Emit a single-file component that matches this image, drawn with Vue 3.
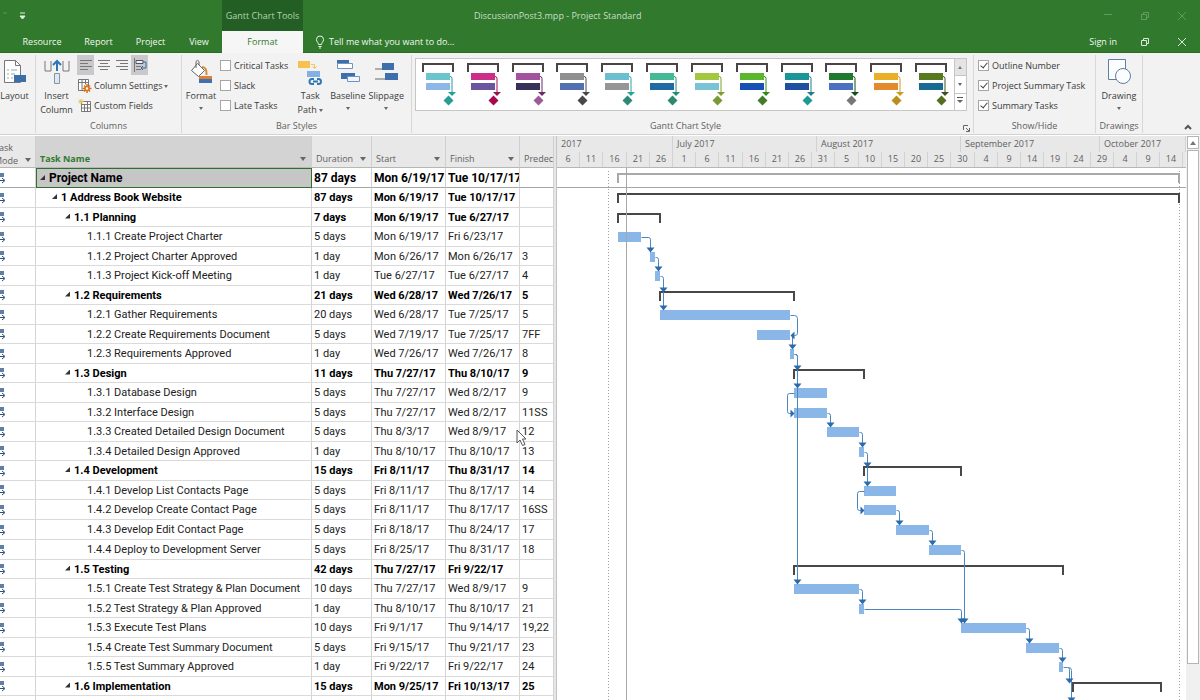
<script setup>
const days = ['6', '11', '16', '21', '26', '1', '6', '11', '16', '21', '26', '31', '5', '10', '15', '20', '25', '30', '4', '9', '14', '19', '24', '29', '4', '9', '14']

const tabs = ['Resource', 'Report', 'Project', 'View']
const barChecks = ['Critical Tasks', 'Slack', 'Late Tasks']
const showChecks = ['Outline Number', 'Project Summary Task', 'Summary Tasks']

const styles = [
  ['#6cc5cc', '#8db7e6', '#259e98', '#259e98'],
  ['#cc2d88', '#6a559e', '#a0104f', '#a9064f'],
  ['#a4529f', '#36305a', '#6b2a66', '#9c5a9a'],
  ['#8f8f8f', '#5371b0', '#484848', '#484848'],
  ['#6bbfd0', '#969696', '#2ba39a', '#2b8a78'],
  ['#45b896', '#1f6aa5', '#1f8f74', '#2b8a70'],
  ['#a1c83f', '#78c4d2', '#809e28', '#789a35'],
  ['#5ab62e', '#164fb5', '#2f8a1c', '#427a2a'],
  ['#1b9698', '#1f4fa0', '#207f86', '#1c9a98'],
  ['#1f7a2d', '#4a72c0', '#114d1a', '#777777'],
  ['#e9af29', '#e5892d', '#cf9a22', '#b8901d'],
  ['#577a1d', '#156b91', '#3d5220', '#55701d'],
]

const tasks = [
  { n: 'Project Name', l: 0, d: '87 days', s: 'Mon 6/19/17', f: 'Tue 10/17/17', p: '', from: 0, to: 121 },
  { n: '1 Address Book Website', l: 1, d: '87 days', s: 'Mon 6/19/17', f: 'Tue 10/17/17', p: '', from: 0, to: 121 },
  { n: '1.1 Planning', l: 2, d: '7 days', s: 'Mon 6/19/17', f: 'Tue 6/27/17', p: '', from: 0, to: 9 },
  { n: '1.1.1 Create Project Charter', l: 3, d: '5 days', s: 'Mon 6/19/17', f: 'Fri 6/23/17', p: '', from: 0, to: 5 },
  { n: '1.1.2 Project Charter Approved', l: 3, d: '1 day', s: 'Mon 6/26/17', f: 'Mon 6/26/17', p: '3', from: 7, to: 8 },
  { n: '1.1.3 Project Kick-off Meeting', l: 3, d: '1 day', s: 'Tue 6/27/17', f: 'Tue 6/27/17', p: '4', from: 8, to: 9 },
  { n: '1.2 Requirements', l: 2, d: '21 days', s: 'Wed 6/28/17', f: 'Wed 7/26/17', p: '5', from: 9, to: 38 },
  { n: '1.2.1 Gather Requirements', l: 3, d: '20 days', s: 'Wed 6/28/17', f: 'Tue 7/25/17', p: '5', from: 9, to: 37 },
  { n: '1.2.2 Create Requirements Document', l: 3, d: '5 days', s: 'Wed 7/19/17', f: 'Tue 7/25/17', p: '7FF', from: 30, to: 37 },
  { n: '1.2.3 Requirements Approved', l: 3, d: '1 day', s: 'Wed 7/26/17', f: 'Wed 7/26/17', p: '8', from: 37, to: 38 },
  { n: '1.3 Design', l: 2, d: '11 days', s: 'Thu 7/27/17', f: 'Thu 8/10/17', p: '9', from: 38, to: 53 },
  { n: '1.3.1 Database Design', l: 3, d: '5 days', s: 'Thu 7/27/17', f: 'Wed 8/2/17', p: '9', from: 38, to: 45 },
  { n: '1.3.2 Interface Design', l: 3, d: '5 days', s: 'Thu 7/27/17', f: 'Wed 8/2/17', p: '11SS', from: 38, to: 45 },
  { n: '1.3.3 Created Detailed Design Document', l: 3, d: '5 days', s: 'Thu 8/3/17', f: 'Wed 8/9/17', p: '12', from: 45, to: 52 },
  { n: '1.3.4 Detailed Design Approved', l: 3, d: '1 day', s: 'Thu 8/10/17', f: 'Thu 8/10/17', p: '13', from: 52, to: 53 },
  { n: '1.4 Development', l: 2, d: '15 days', s: 'Fri 8/11/17', f: 'Thu 8/31/17', p: '14', from: 53, to: 74 },
  { n: '1.4.1 Develop List Contacts Page', l: 3, d: '5 days', s: 'Fri 8/11/17', f: 'Thu 8/17/17', p: '14', from: 53, to: 60 },
  { n: '1.4.2 Develop Create Contact Page', l: 3, d: '5 days', s: 'Fri 8/11/17', f: 'Thu 8/17/17', p: '16SS', from: 53, to: 60 },
  { n: '1.4.3 Develop Edit Contact Page', l: 3, d: '5 days', s: 'Fri 8/18/17', f: 'Thu 8/24/17', p: '17', from: 60, to: 67 },
  { n: '1.4.4 Deploy to Development Server', l: 3, d: '5 days', s: 'Fri 8/25/17', f: 'Thu 8/31/17', p: '18', from: 67, to: 74 },
  { n: '1.5 Testing', l: 2, d: '42 days', s: 'Thu 7/27/17', f: 'Fri 9/22/17', p: '', from: 38, to: 96 },
  { n: '1.5.1 Create Test Strategy & Plan Document', l: 3, d: '10 days', s: 'Thu 7/27/17', f: 'Wed 8/9/17', p: '9', from: 38, to: 52 },
  { n: '1.5.2 Test Strategy & Plan Approved', l: 3, d: '1 day', s: 'Thu 8/10/17', f: 'Thu 8/10/17', p: '21', from: 52, to: 53 },
  { n: '1.5.3 Execute Test Plans', l: 3, d: '10 days', s: 'Fri 9/1/17', f: 'Thu 9/14/17', p: '19,22', from: 74, to: 88 },
  { n: '1.5.4 Create Test Summary Document', l: 3, d: '5 days', s: 'Fri 9/15/17', f: 'Thu 9/21/17', p: '23', from: 88, to: 95 },
  { n: '1.5.5 Test Summary Approved', l: 3, d: '1 day', s: 'Fri 9/22/17', f: 'Fri 9/22/17', p: '24', from: 95, to: 96 },
  { n: '1.6 Implementation', l: 2, d: '15 days', s: 'Mon 9/25/17', f: 'Fri 10/13/17', p: '25', from: 98, to: 117 },
]

const X0 = 61
const DAY = 4.64
const x = (d) => Math.round(X0 + d * DAY)

const tickX = (i) => Math.round(i * 5 * DAY)
const dayCells = days.map((t, i) => ({ t, w: tickX(i + 1) - tickX(i) }))
const months = [
  { t: '2017', w: 116 },
  { t: 'July 2017', w: 144 },
  { t: 'August 2017', w: 144 },
  { t: 'September 2017', w: 139 },
  { t: 'October 2017', w: 86 },
]

// Row heights alternate so that the average pitch is a little over 19.5px.
const heights = tasks.map((_, i) => (i === 0 || i === 18 || i % 2 === 1 ? 20 : 19))
const mid = []
heights.reduce((top, h) => {
  mid.push(top + 10)
  return top + h
}, 0)

const bars = tasks
  .map((t, i) => ({ ...t, i }))
  .filter((t) => t.l === 3)
  .map((t) => ({ x: x(t.from), y: mid[t.i] - 5, w: x(t.to) - x(t.from) }))
const brackets = tasks
  .map((t, i) => ({ ...t, i }))
  .filter((t) => t.l < 3)
  .map((t) => ({ root: t.l === 0, d: `M${x(t.from)} ${mid[t.i] + 5}V${mid[t.i] - 4}H${x(t.to)}V${mid[t.i] + 5}` }))

const lines = []
const heads = []
const down = (cx, y) => heads.push(`M${cx - 4} ${y - 4}h8l-4 5z`)
const link = (i, j, off = 3) => {
  const cx = x(tasks[j].from) + off
  lines.push(`M${x(tasks[i].to)} ${mid[i]}H${cx - 2}q2 0 2 2V${mid[j] - 6}`)
  down(cx, mid[j] - 6)
}
link(3, 4, 0)
link(4, 5)
link(5, 7)
down(x(9) + 3, mid[6] - 5)
lines.push(`M${x(37)} ${mid[7]}h4q3 0 3 3V${mid[8] - 2}q0 2 -3 2`)
heads.push(`M${x(37)} ${mid[8]}l4 -4v8z`)
lines.push(`M${x(37) + 2} ${mid[8]}V${mid[9] - 6}`)
down(x(37) + 2, mid[9] - 6)
link(9, 11)
link(9, 21)
down(x(38) + 3, mid[10] - 5)
for (const [a, b] of [[11, 12], [16, 17]]) {
  const s = x(tasks[a].from)
  lines.push(`M${s} ${mid[a]}h-5q-2 0 -2 2V${mid[b] - 2}q0 2 2 2h2`)
  heads.push(`M${s} ${mid[b]}l-4 -4v8z`)
}
link(12, 13)
link(13, 14)
link(14, 16)
down(x(53) + 3, mid[15] - 5)
link(17, 18)
link(18, 19)
link(19, 23)
link(21, 22)
link(22, 23, 0)
link(23, 24)
link(24, 25)
lines.push(`M${x(96)} ${mid[25]}h4q2 0 2 2V${mid[26] - 8}`)
down(x(96) + 6, mid[26] - 5)
lines.push(`M${x(96) + 5} ${mid[25]}q3 0 3 3V${mid[26] + 11}`)
down(x(96) + 8, mid[26] + 14)
</script>

<template>
  <div class="app">
    <header class="title">
      <div class="qat">
        <svg width="30" height="12" viewBox="0 0 30 12"><path d="M3 3h4" stroke="#5b9a55" /><path d="M20 3h5M20 6h5l-2.500 3z" fill="#e6f2e4" stroke="#e6f2e4" stroke-width="1" /></svg>
      </div>
      <div class="context">Gantt Chart Tools</div>
      <div class="doc">DiscussionPost3.mpp - Project Standard</div>
      <div class="win dim">
        <button aria-label="Minimize"><svg width="10" height="10" viewBox="0 0 10 10"><path d="M1 3.500h8" /></svg></button>
        <button aria-label="Restore"><svg width="10" height="10" viewBox="0 0 10 10"><path d="M1.500 3.500h5v5h-5zM3.500 3.500v-2h5v5h-2" /></svg></button>
        <button aria-label="Close"><svg width="10" height="10" viewBox="0 0 10 10"><path d="M1 1l8 8M9 1l-8 8" /></svg></button>
      </div>
    </header>

    <nav class="tabs">
      <span></span>
      <button v-for="t in tabs" :key="t">{{ t }}</button>
      <button class="active">Format</button>
      <button class="tell">
        <svg width="10" height="14" viewBox="0 0 10 14"><path d="M3.500 9.500C3.500 7.500 1.500 7 1.500 4.500a3.500 3.500 0 0 1 7 0C8.500 7 6.500 7.500 6.500 9.500zM3.500 11.500h3M4 13h2" fill="none" stroke="#e8f3e6" /></svg>
        Tell me what you want to do...
      </button>
      <a class="sign" href="#">Sign in</a>
      <div class="win">
        <button aria-label="Restore document"><svg width="10" height="10" viewBox="0 0 10 10"><path d="M1.500 3.500h5v5h-5zM3.500 3.500v-2h5v5h-2" /></svg></button>
        <button aria-label="Close document"><svg width="10" height="10" viewBox="0 0 10 10"><path d="M1 1l8 8M9 1l-8 8" /></svg></button>
      </div>
    </nav>

    <section class="ribbon">
      <div class="group g-layout">
        <div class="body">
          <button class="big">
            <svg width="24" height="26" viewBox="0 0 24 26">
              <path d="M1.500 1.500h11l5 5v17h-16z" fill="#fff" stroke="#777" /><path d="M12.500 1.500v5h5" fill="none" stroke="#777" />
              <path d="M4 11h2M8 11h6M4 15h2M8 15h4M4 19h2M8 19h2" stroke="#8aa" /><path d="M11 16h12v7H11z" fill="#3a6fa8" />
            </svg>
            <span>Layout</span>
          </button>
        </div>
        <div class="label"></div>
      </div>

      <div class="group g-columns">
        <div class="body">
          <button class="big">
            <svg width="26" height="26" viewBox="0 0 26 26">
              <path d="M1 2v10h6V2M19 2v10h6V2" fill="none" stroke="#777" /><path d="M13 12V2M9 6l4-4 4 4" fill="none" stroke="#2e75b6" stroke-width="2" />
              <path d="M10.500 14.500h5v10h-5z" fill="#dce8f4" stroke="#8a94a0" />
            </svg>
            <span>Insert<br />Column</span>
          </button>
          <div class="stack">
            <div class="aligns">
              <button class="on" aria-label="Align Left"><svg width="12" height="12" viewBox="0 0 12 12"><path d="M0 1.500h12M0 4.500h8M0 7.500h12M0 10.500h8" /></svg></button>
              <button aria-label="Center"><svg width="12" height="12" viewBox="0 0 12 12"><path d="M0 1.500h12M2 4.500h8M0 7.500h12M2 10.500h8" /></svg></button>
              <button aria-label="Align Right"><svg width="12" height="12" viewBox="0 0 12 12"><path d="M0 1.500h12M4 4.500h8M0 7.500h12M4 10.500h8" /></svg></button>
              <button class="on" aria-label="Wrap Text"><svg width="14" height="14" viewBox="0 0 14 14"><path d="M1.500 0v14" /><path d="M3 2.500h7v3H3z" stroke="#555" fill="#eef" /><path d="M3 8.500h5M3 11.500h5" /><path d="M10 4h3v6H8M10 8l-2 2 2 2" stroke="#2e6ca6" fill="none" /></svg></button>
            </div>
            <button class="row">
              <svg width="14" height="14" viewBox="0 0 14 14"><path d="M.5.5h10v11H.5zM.5 3.500h10M4 .5v11M7.500.5v5" fill="#fff" stroke="#777" /><path d="M9 5v9M4.500 9.500h9M6 6.500l6 6M12 6.500l-6 6" stroke="#d9731a" stroke-width="1.500" /><circle cx="9" cy="9.500" r="2" fill="#fff" stroke="#d9731a" stroke-width="1.500" /></svg>
              Column Settings <i class="caret"></i>
            </button>
            <button class="row">
              <svg width="14" height="14" viewBox="0 0 14 14"><path d="M3.500 2.500h9v10h-9zM3.500 5.500h9M3.500 9h9M6.500 5v8M9.500 2v11" fill="#fff" stroke="#777" /><path d="M3 0v5M.5 2.500h5M1 .5l4 4M5 .5l-4 4" stroke="#e3c05a" /></svg>
              Custom Fields
            </button>
          </div>
        </div>
        <div class="label">Columns</div>
      </div>

      <div class="group g-bars">
        <div class="body">
          <button class="big b-format">
            <svg width="24" height="26" viewBox="0 0 24 26">
              <path d="M2.500 11.500l6-7 7 7-6 6z" fill="#fff" stroke="#666" /><path d="M7 9V2.500q1.500-2.500 3 0V6" fill="none" stroke="#666" /><path d="M13 8q5 0 4.500 8" fill="none" stroke="#d88a3a" stroke-width="2" />
              <path d="M10 17h13v4H10z" fill="#d98236" /><path d="M10 20h13v4H10z" fill="#3f72ae" />
            </svg>
            <span>Format</span><i class="caret"></i>
          </button>
          <div class="checks">
            <label v-for="c in barChecks" :key="c"><input type="checkbox" />{{ c }}</label>
          </div>
          <button class="big b-task">
            <svg width="26" height="26" viewBox="0 0 26 26">
              <path d="M1 2h12v7H1z" fill="#f6c24d" /><path d="M14 5.500h3.500V9M15.500 7.500l2 2 2-2" fill="none" stroke="#f2c463" />
              <path d="M10 12h13v6H10z" fill="#84b0e4" /><path d="M17 20h-2a2.500 2.500 0 0 0 0 5h2M20 20h1.500a2.500 2.500 0 0 1 0 5H20M16 22.500h5" fill="none" stroke="#2f78b4" stroke-width="2" />
            </svg>
            <span>Task<br />Path <i class="caret"></i></span>
          </button>
          <button class="big b-base">
            <svg width="26" height="26" viewBox="0 0 26 26">
              <path d="M2 1h12v4H2z" fill="#3f6eac" /><path d="M2.500 4.500h15v5h-15z" fill="#fff" stroke="#6f94c6" />
              <path d="M6 14h14v6H6z" fill="#3f6eac" /><path d="M12.500 17.500h12v5h-12z" fill="#f0f4fb" stroke="#6f94c6" />
            </svg>
            <span>Baseline</span><i class="caret"></i>
          </button>
          <button class="big b-slip">
            <svg width="26" height="26" viewBox="0 0 26 26">
              <path d="M9 4h12v7H9zM12 14h13v7H12z" fill="#3f6eac" /><path d="M2 10h7M2 20h10" stroke="#666" stroke-width="1" />
            </svg>
            <span>Slippage</span><i class="caret"></i>
          </button>
        </div>
        <div class="label">Bar Styles</div>
      </div>

      <div class="group g-style">
        <div class="body">
          <div class="gallery">
            <button v-for="(s, i) in styles" :key="i" class="swatch" :aria-label="'Gantt style ' + (i + 1)">
              <svg width="44" height="50" viewBox="0 0 44 50">
                <path d="M7 13V5h30v8" fill="none" stroke="#4a4446" stroke-width="2" />
                <path d="M10 14h24v7H10z" :fill="s[0]" /><path d="M10 24h24v7H10z" :fill="s[1]" />
                <path d="M34 17.500q2 0 2 2V34" fill="none" :stroke="s[2]" /><path d="M32 33h8l-4 4z" :fill="s[2]" />
                <path d="M32.500 36.500l5 5-5 5-5-5z" :fill="s[3]" />
              </svg>
            </button>
            <div class="scroll">
              <button class="off" aria-label="Previous styles"><i class="caret up"></i></button>
              <button aria-label="Next styles"><i class="caret"></i></button>
              <button aria-label="More styles"><i class="caret more"></i></button>
            </div>
          </div>
        </div>
        <div class="label launch">
          <span>Gantt Chart Style</span>
          <button aria-label="Format Bar Styles"><svg width="7" height="7" viewBox="0 0 7 7"><path d="M.5 5V.5H5M3 3l3 3M6.500 3v3.500H3" fill="none" stroke="#666" /></svg></button>
        </div>
      </div>

      <div class="group g-show">
        <div class="body">
          <div class="checks">
            <label v-for="c in showChecks" :key="c"><input type="checkbox" checked />{{ c }}</label>
          </div>
        </div>
        <div class="label">Show/Hide</div>
      </div>

      <div class="group g-draw">
        <div class="body">
          <button class="big">
            <svg width="24" height="26" viewBox="0 0 24 26"><path d="M1.500.5h17v20h-17z" fill="#fcfdff" stroke="#5d7fa3" /><circle cx="16" cy="17" r="7.500" fill="#fcfdff" stroke="#5d7fa3" /></svg>
            <span>Drawing</span><i class="caret"></i>
          </button>
        </div>
        <div class="label">Drawings</div>
      </div>

      <div class="rest">
        <button aria-label="Collapse the Ribbon"><svg width="8" height="6" viewBox="0 0 8 6"><path d="M1 5l3-3 3 3" fill="none" stroke="#555" stroke-width="2" /></svg></button>
      </div>
    </section>

    <main class="work">
      <div class="grid">
        <table>
          <colgroup><col class="c0" /><col class="c1" /><col class="c2" /><col class="c3" /><col class="c3" /><col class="c5" /></colgroup>
          <thead>
            <tr>
              <th><div class="th mode"><span>Task<br />Mode</span><i class="caret"></i></div></th>
              <th class="sel"><div class="th">Task Name<i class="caret"></i></div></th>
              <th><div class="th">Duration<i class="caret"></i></div></th>
              <th><div class="th">Start<i class="caret"></i></div></th>
              <th><div class="th">Finish<i class="caret"></i></div></th>
              <th><div class="th pred">Predec</div></th>
            </tr>
          </thead>
          <tbody>
            <tr v-for="(t, i) in tasks" :key="t.n" :class="['lv' + t.l, { extra: i === 18 }]">
              <td class="icon"><svg width="6" height="12" viewBox="0 0 6 12"><path d="M0 1h4v4H0z" fill="#5f7fa6" /><path d="M0 8.500h4M2 6l3 2.500L2 11" fill="none" stroke="#2c4f7c" /></svg></td>
              <td class="name"><i v-if="t.l < 3" class="fold"></i>{{ t.n }}</td>
              <td>{{ t.d }}</td>
              <td>{{ t.s }}</td>
              <td>{{ t.f }}</td>
              <td>{{ t.p }}</td>
            </tr>
            <tr><td></td><td></td><td></td><td></td><td></td><td></td></tr>
          </tbody>
        </table>
      </div>

      <div class="splitter"></div>

      <div class="chart">
        <div class="scale">
          <div class="months"><span v-for="m in months" :key="m.t" :style="{ width: m.w + 'px' }">{{ m.t }}</span></div>
          <div class="days"><span v-for="(c, i) in dayCells" :key="i" :style="{ width: c.w + 'px' }">{{ c.t }}</span></div>
        </div>
        <svg class="plot" aria-label="Gantt chart">
          <path d="M51.500 3V540M622.500 3V540" stroke="#a0a0a0" stroke-dasharray="1 2" />
          <path d="M0 19.500H2000" stroke="#a3a8a3" />
          <rect v-for="(b, i) in bars" :key="'b' + i" :x="b.x" :y="b.y" :width="b.w" height="10" fill="#8bb7e8" />
          <path v-for="(b, i) in brackets" :key="'k' + i" :d="b.d" fill="none" :stroke="b.root ? '#a9a9a9' : '#48484a'" :stroke-width="2" />
          <path d="M69.500 0V540" stroke="#a3aaa3" />
          <g transform="translate(.5 .5)">
            <path v-for="(d, i) in lines" :key="'l' + i" :d="d" fill="none" stroke="#4a86c0" />
            <path v-for="(d, i) in heads" :key="'h' + i" :d="d" fill="#2a6cab" />
          </g>
        </svg>
      </div>

      <div class="vscroll">
        <button aria-label="Scroll up"><i class="caret up"></i></button>
        <div class="thumb"></div>
        <div class="track"></div>
      </div>

      <svg class="cursor" width="12" height="18" viewBox="0 0 12 18"><path d="M1 1v13l3-3 2.500 5.500 2.500-1L6.500 10H10z" fill="#fff" stroke="#555" /></svg>
    </main>
  </div>
</template>

<style>
body { margin: 0; overflow: hidden; }
</style>

<style scoped>
.app { height: 100vh; display: flex; flex-direction: column; overflow: hidden; background: #fff; color: #3a3a3a; font-family: "Open Sans", "Noto Sans", sans-serif; font-size: 9px; line-height: 14px; }
* { box-sizing: border-box; }
button { font: inherit; color: inherit; background: none; border: 0; padding: 0; margin: 0; white-space: nowrap; }
svg { display: block; flex: none; }

.title { flex: none; display: flex; align-items: center; height: 31px; background: #31792d; color: #c9dfc6; }
.qat { width: 222px; }
.context { width: 81px; height: 31px; line-height: 32px; text-align: center; background: #235f24; color: #b3d3af; white-space: nowrap; }
.doc { flex: 1; padding-left: 171px; white-space: nowrap; }
.win { display: flex; }
.win button { width: 37px; display: flex; justify-content: center; }
.win svg { fill: none; stroke: #dcebd9; }
.win.dim svg { stroke: #649c60; }

.tabs { flex: none; display: grid; grid-template-columns: 12px 60px 53px 51px 46px 81px 1fr auto auto; height: 22px; background: #31792d; border-bottom: 1px solid #2b6a28; color: #f2f8f1; align-items: stretch; }
.tabs .active { background: #f6f6f6; color: #31792d; height: 22px; }
.tell { display: flex; align-items: center; gap: 4px; padding-left: 12px; }
.sign { color: inherit; text-decoration: none; align-self: center; padding-right: 9px; }
.tabs .win { align-items: center; }

.ribbon { flex: none; display: flex; height: 82px; background: #f2f2f2; border-bottom: 1px solid #d2d2d2; }
.group { flex: none; display: flex; flex-direction: column; border-right: 1px solid #d8d8d8; margin: 2px 0; height: 78px; }
.body { flex: 1; display: flex; align-items: flex-start; }
.label { height: 14px; line-height: 14px; text-align: center; color: #5f5f5f; }
.g-layout { width: 36px; }
.g-columns { width: 146px; }
.g-bars { width: 230px; }
.g-style { flex: 1; min-width: 562px; }
.g-show { width: 122px; }
.g-draw { width: 47px; }
.big { display: flex; flex-direction: column; align-items: center; padding-top: 4px; }
.big svg { margin-bottom: 4px; }
.big > .caret { margin-top: 4px; }
.g-layout .big { width: 29px; }
.g-columns .big { width: 41px; }
.g-draw .big { width: 46px; }
.b-format { width: 38px; }
.b-task { width: 38px; margin-left: 3px; }
.b-base { width: 37px; }
.b-slip { width: 40px; }
.caret { display: inline-block; width: 0; height: 0; border: 2px solid transparent; border-top: 3px solid #666; border-bottom: 0; vertical-align: middle; }
.caret.up { border-top: 0; border-bottom: 3px solid #777; }
.caret.more { position: relative; border-width: 3px 3px 0; }
.caret.more::before { content: ""; position: absolute; left: -3px; top: -6px; width: 6px; height: 1px; background: #555; }
.stack { display: flex; flex-direction: column; }
.aligns { display: flex; height: 20px; margin-bottom: 1px; gap: 1px; }
.aligns button { width: 17px; display: flex; align-items: center; justify-content: center; }
.aligns .on { background: #c9c9cb; }
.aligns svg { stroke: #777; }
.row { display: flex; align-items: center; height: 20px; gap: 2px; padding-left: 1px; }
.checks { display: flex; flex-direction: column; }
.checks label { display: flex; align-items: center; height: 20px; gap: 3px; white-space: nowrap; padding-top: 1px; }
.checks input { appearance: none; width: 11px; height: 11px; margin: 0; border: 1px solid #a6a6a6; background: #fff; position: relative; }
.checks input:checked::after { content: ""; position: absolute; left: 3px; top: 0; width: 3px; height: 6px; border: solid #444; border-width: 0 1px 1px 0; transform: rotate(40deg); }
.g-show .checks { padding-left: 4px; }
.gallery { flex: 1; display: flex; height: 53px; margin: 3px 6px 0 3px; background: #fff; border: 1px solid #c6c6c6; }
.swatch { flex: 1; display: flex; }
.scroll { width: 12px; display: flex; flex-direction: column; border-left: 1px solid #c6c6c6; }
.scroll button { flex: 1; display: flex; align-items: center; justify-content: center; border-top: 1px solid #c6c6c6; }
.scroll button.off { background: #e4e4e4; border-top: 0; }
.launch { display: flex; }
.launch span { flex: 1; padding-right: 4px; }
.launch button { width: 10px; padding-top: 4px; }
.rest { width: 57px; display: flex; justify-content: flex-end; align-items: flex-end; padding: 0 8px 4px 0; }

.work { flex: 1; min-height: 0; display: flex; position: relative; overflow: hidden; padding-top: 1px; }
.grid { flex: none; width: 554px; overflow: hidden; }
table { width: 554px; table-layout: fixed; border-collapse: separate; border-spacing: 0; }
.c0 { width: 36px; } .c1 { width: 276px; } .c2 { width: 60px; } .c3 { width: 74px; } .c5 { width: 34px; }
th { height: 32px; padding: 0; background: #e8e8e8; border-right: 1px solid #cfcfcf; border-bottom: 1px solid #b3b8b3; font-weight: 400; text-align: left; vertical-align: bottom; color: #606060; overflow: hidden; white-space: nowrap; }
th.sel { background: #d3d3d3; color: #31792d; font-weight: 700; }
.th { display: flex; align-items: center; justify-content: space-between; padding: 3px 5px 0 4px; height: 20px; }
.th .caret { border-width: 4px 3px 0; }
.th.pred { padding-right: 0; }
.th.mode { height: 31px; line-height: 13px; padding: 0 4px 0 0; align-items: flex-end; }
.mode span { margin-left: -6px; }
.mode .caret { margin-bottom: 5px; }
td { height: 20px; padding: 1px 0 0 2px; border-right: 1px solid #d4d4d4; border-bottom: 1px solid #dadada; line-height: 16px; color: #222; white-space: nowrap; overflow: hidden; font-family: Roboto, "Open Sans", sans-serif; font-size: 11px; }
tr:nth-child(odd) td { height: 19px; }
tr.lv0 td, tr.extra td { height: 20px; }
td.icon { padding: 0; }
.lv0 td, .lv1 td, .lv2 td { font-weight: 700; color: #000; }
.lv0 td { font-size: 12px; border-bottom-color: #a3a8a3; }
.lv0 .name { background: #c6c6c6; outline: 1px solid #2e7030; outline-offset: -1px; padding-left: 4px; }
.lv1 .name { padding-left: 16px; }
.lv2 .name { padding-left: 29px; }
.lv3 .name { padding-left: 51px; }
.fold { display: inline-block; width: 5px; height: 5px; margin-right: 4px; background: #333; clip-path: polygon(100% 0, 100% 100%, 0 100%); vertical-align: 2px; }
.splitter { flex: none; width: 3px; background: #e6e6e6; border-right: 1px solid #c4c4c4; }
.chart { flex: 1; min-width: 0; display: flex; flex-direction: column; overflow: hidden; }
.scale { flex: none; height: 32px; background: #e8e8e8; border-bottom: 1px solid #b3b8b3; color: #606060; overflow: hidden; }
.months, .days { display: flex; white-space: nowrap; }
.months { height: 16px; line-height: 16px; }
.months span { flex: none; border-right: 1px solid #d2d2d2; padding-left: 4px; }
.days { height: 15px; line-height: 14px; }
.days span { flex: none; border-right: 1px solid #d2d2d2; text-align: center; }
.plot { flex: 1; width: 100%; min-height: 0; }
.vscroll { flex: none; width: 14px; padding: 0 1px 0 1px; display: flex; flex-direction: column; background: #f0f0f0; }
.vscroll button { height: 13px; display: flex; justify-content: center; align-items: center; border: 1px solid #b5b5b5; background: #fff; }
.vscroll .caret { border-width: 0 3px 4px; }
.thumb { flex: 1; background: #fff; border: 1px solid #b5b5b5; margin-top: 1px; }
.track { height: 36px; }
.cursor { position: absolute; left: 516px; top: 294px; }
</style>
